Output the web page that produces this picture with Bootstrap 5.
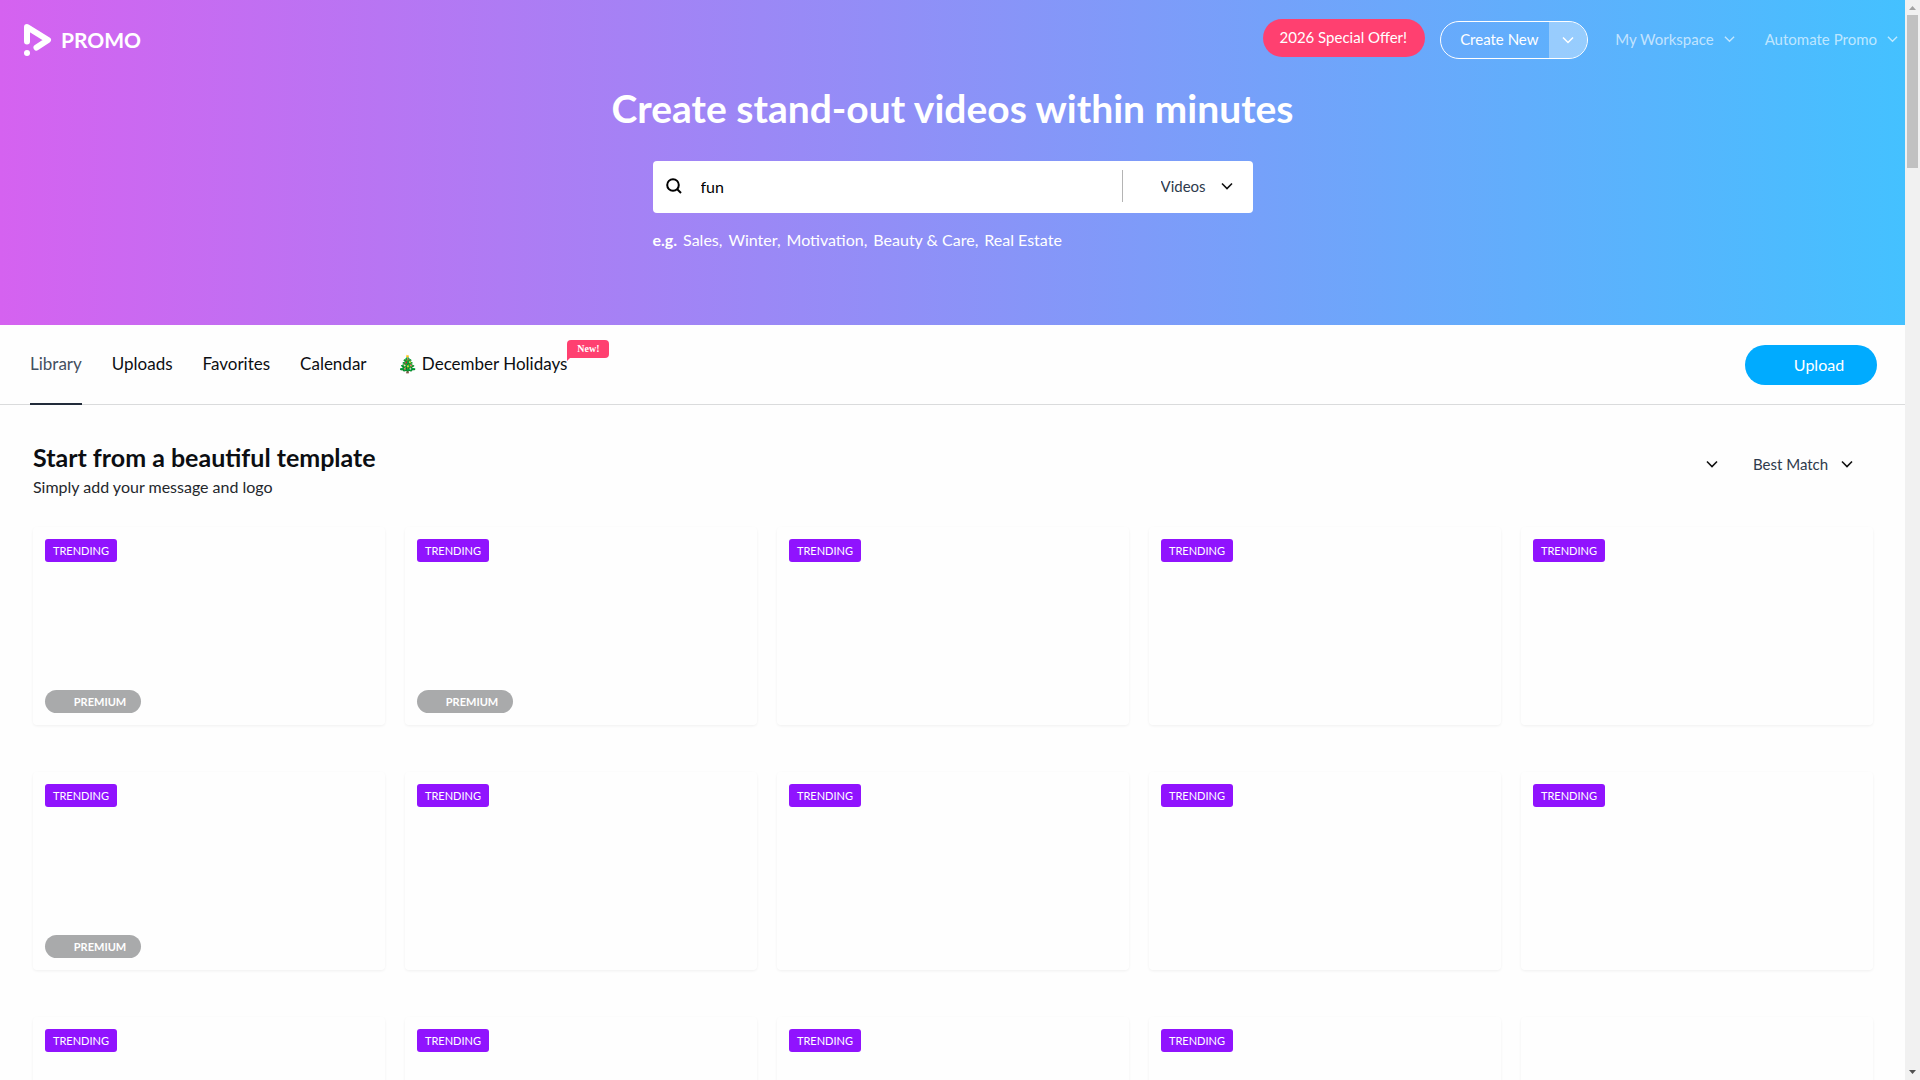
<!DOCTYPE html>
<html lang="en">
<head>
<meta charset="utf-8">
<meta name="viewport" content="width=device-width, initial-scale=1">
<title>Promo</title>
<link href="https://cdn.jsdelivr.net/npm/bootstrap@5.3.0/dist/css/bootstrap.min.css" rel="stylesheet">
<style>
  body { font-family: Lato, "Liberation Sans", sans-serif; font-size: 16px; line-height: 24px; color: #0c0e12; background: #fefefe; }
  a { text-decoration: none; color: inherit; }
  h1, h2, p { margin: 0; }
  .scroll-track { width: 15px; flex: none; background: #f1f1f1; }
  .scroll-track svg { display: block; width: 15px; height: 15px; }
  .scroll-thumb { width: 11px; height: 153px; background: #c1c1c1; }

  .hero { height: 325px; background: linear-gradient(90deg, #d562f0, #44c1ff); color: #fff; }
  .top-bar { height: 80px; padding: 0 7px 0 24px; }
  .brand { font-size: 21px; font-weight: 700; gap: 9px; }
  .top-actions { font-size: 15px; }
  .pill { height: 38px; border-radius: 19px; font-size: 15px; line-height: 20px; }
  .pill-offer { background: #ff4070; color: #fff; width: 162px; padding: 0 2px 2px 0; margin: 0 15px 4px 0; }
  .create-group { border: 1px solid #fff; overflow: hidden; margin-right: 27px; }
  .create-group button { border: 0; background: none; color: #fff; padding: 0; }
  .create-group .create-main { width: 108px; padding: 0 0 2px 8px; }
  .create-group .create-more { width: 38px; background: #ffffff5c; }
  .menu-link { color: #ffffffa6; gap: 10px; padding-bottom: 2px; }
  .menu-link + .menu-link { margin-left: 30px; }
  .hero-title { font-size: 39px; line-height: 48px; font-weight: 700; margin-top: 4px; }
  .search-box { width: 600px; height: 52px; margin-top: 29px; background: #fff; border-radius: 4px; padding: 0 13px 2px; }
  .search-box input { font-size: 16px; color: #000; padding: 2px 0 0; margin-left: 19px; }
  .search-box input, .search-box input:focus { border: 0; box-shadow: none; background: none; }
  .search-rule { width: 1px; height: 32px; background: #b4b4b4; margin-right: 38px; }
  .plain-select { width: auto; flex: none; border: 0; background-color: transparent; font-size: 15px; line-height: 24px; color: #2e3a4c; padding: 0 24px 0 0; background-position: right 0 center; background-size: 12px 12px;
    background-image: url("data:image/svg+xml,%3Csvg xmlns='http://www.w3.org/2000/svg' viewBox='0 0 12 12'%3E%3Cpath d='M1 3.5l5 5 5-5' fill='none' stroke='%23111' stroke-width='1.6'/%3E%3C/svg%3E"); }
  .search-box .plain-select { padding-right: 26px; margin-right: 7px; }
  .examples { width: 600px; margin-top: 15px; gap: 6px; }

  .tab-bar { height: 80px; border-bottom: 1px solid #dadbdc; padding: 0 28px 0 30px; }
  .tabs { gap: 30px; height: 80px; font-size: 17px; }
  .tab-item { display: flex; align-items: center; height: 80px; border-bottom: 2px solid transparent; position: relative; }
  .tab-item.active { border-color: #222c3a; color: #44505f; }
  .new-flag { position: absolute; left: 100%; top: 15px; width: 42px; height: 18px; background: #ff4070; border-radius: 4px 4px 4px 0; color: #fff; font: bold 10px/18px "Liberation Serif", serif; text-align: center; }
  .new-flag::after { content: ""; position: absolute; left: 0; top: 17px; border-top: 4px solid #ff4070; border-right: 4px solid transparent; }
  .pill-upload { height: 40px; border-radius: 20px; width: 132px; background: #00abff; color: #fff; padding: 0 0 0 16px; font-size: 16px; }

  .library { padding: 35px 32px 0 33px; }
  .library h2 { font-size: 25px; line-height: 34px; font-weight: 700; }
  .library p { margin-top: 1px; color: #24272c; }
  .filters { gap: 35px; padding: 12px 20px 0 0; }
  .clip-grid { display: grid; grid-template-columns: repeat(5, 1fr); gap: 47px 20px; margin-top: 28px; }
  .clip { aspect-ratio: 16 / 9; border-radius: 4px; box-shadow: 0 1px 3px #0000000f; padding: 12px; }
  .tag { height: 23px; line-height: 23px; font-size: 11px; color: #fff; text-align: center; }
  .tag-trend { width: 72px; background: #9013fe; border-radius: 3px; }
  .tag-premium { width: 96px; background: #a9aaab; border-radius: 12px; font-weight: 700; padding-left: 14px; }
</style>
<script src="https://cdn.jsdelivr.net/npm/bootstrap@5.3.0/dist/js/bootstrap.bundle.min.js"></script>
</head>
<body>
<div class="d-flex vh-100 overflow-hidden">
  <div class="flex-grow-1 overflow-hidden">
    <header class="hero d-flex flex-column align-items-center">
      <nav class="top-bar w-100 d-flex align-items-center justify-content-between">
        <a href="#" class="brand d-flex align-items-center">
          <svg width="28" height="32" viewBox="0 0 28 32" fill="none" stroke="#fff" stroke-width="6" stroke-linecap="round" stroke-linejoin="round"><path d="M3 17.500V3L24 16 12.500 23.500"/><circle cx="3" cy="29" r="3" fill="#fff" stroke="none"/></svg>
          <span>PROMO</span>
        </a>
        <div class="top-actions d-flex align-items-center">
          <button type="button" class="btn pill pill-offer">2026 Special Offer!</button>
          <div class="create-group pill d-flex">
            <button type="button" class="create-main">Create New</button>
            <button type="button" class="create-more d-flex align-items-center justify-content-center" aria-label="More create options"><svg width="12" height="12" viewBox="0 0 12 12" fill="none" stroke="#fff" stroke-width="1.500"><path d="M1 3.500l5 5 5-5"/></svg></button>
          </div>
          <a href="#" class="menu-link d-flex align-items-center">My Workspace <svg width="11" height="12" viewBox="0 0 12 12" fill="none" stroke="currentColor" stroke-width="1.500"><path d="M1 3.500l5 5 5-5"/></svg></a>
          <a href="#" class="menu-link d-flex align-items-center">Automate Promo <svg width="11" height="12" viewBox="0 0 12 12" fill="none" stroke="currentColor" stroke-width="1.500"><path d="M1 3.500l5 5 5-5"/></svg></a>
        </div>
      </nav>
      <h1 class="hero-title">Create stand-out videos within minutes</h1>
      <form class="search-box d-flex align-items-center">
        <svg width="16" height="16" viewBox="0 0 16 16" fill="none" stroke="#000" stroke-width="2" class="flex-shrink-0"><circle cx="7" cy="7" r="5.800"/><path d="M11 11l4 4"/></svg>
        <input type="text" class="form-control" value="fun" aria-label="Search videos">
        <span class="search-rule flex-shrink-0"></span>
        <select class="form-select plain-select" aria-label="Media type"><option>Videos</option></select>
      </form>
      <p class="examples d-flex"><b>e.g.</b> <a href="#">Sales,</a> <a href="#">Winter,</a> <a href="#">Motivation,</a> <a href="#">Beauty &amp; Care,</a> <a href="#">Real Estate</a></p>
    </header>
    <div class="tab-bar d-flex align-items-center justify-content-between">
      <nav class="tabs d-flex">
        <a href="#" class="tab-item active">Library</a>
        <a href="#" class="tab-item">Uploads</a>
        <a href="#" class="tab-item">Favorites</a>
        <a href="#" class="tab-item">Calendar</a>
        <a href="#" class="tab-item">🎄 December Holidays<span class="new-flag">New!</span></a>
      </nav>
      <button type="button" class="btn pill-upload">Upload</button>
    </div>
    <main class="library">
      <div class="d-flex justify-content-between align-items-start">
        <div>
          <h2>Start from a beautiful template</h2>
          <p>Simply add your message and logo</p>
        </div>
        <div class="filters d-flex">
          <select class="form-select plain-select" aria-label="Filter"><option label=" "></option></select>
          <select class="form-select plain-select" aria-label="Sort order"><option>Best Match</option></select>
        </div>
      </div>
      <div class="clip-grid">
        <div class="clip d-flex flex-column justify-content-between"><span class="tag tag-trend">TRENDING</span><span class="tag tag-premium">PREMIUM</span></div>
        <div class="clip d-flex flex-column justify-content-between"><span class="tag tag-trend">TRENDING</span><span class="tag tag-premium">PREMIUM</span></div>
        <div class="clip d-flex flex-column"><span class="tag tag-trend">TRENDING</span></div>
        <div class="clip d-flex flex-column"><span class="tag tag-trend">TRENDING</span></div>
        <div class="clip d-flex flex-column"><span class="tag tag-trend">TRENDING</span></div>
        <div class="clip d-flex flex-column justify-content-between"><span class="tag tag-trend">TRENDING</span><span class="tag tag-premium">PREMIUM</span></div>
        <div class="clip d-flex flex-column"><span class="tag tag-trend">TRENDING</span></div>
        <div class="clip d-flex flex-column"><span class="tag tag-trend">TRENDING</span></div>
        <div class="clip d-flex flex-column"><span class="tag tag-trend">TRENDING</span></div>
        <div class="clip d-flex flex-column"><span class="tag tag-trend">TRENDING</span></div>
        <div class="clip d-flex flex-column"><span class="tag tag-trend">TRENDING</span></div>
        <div class="clip d-flex flex-column"><span class="tag tag-trend">TRENDING</span></div>
        <div class="clip d-flex flex-column"><span class="tag tag-trend">TRENDING</span></div>
        <div class="clip d-flex flex-column"><span class="tag tag-trend">TRENDING</span></div>
        <div class="clip"></div>
      </div>
    </main>
  </div>
  <div class="scroll-track d-flex flex-column align-items-center" aria-hidden="true">
    <svg viewBox="0 0 15 15"><path d="M4 10h7L7.500 6z" fill="#a3a3a3"/></svg>
    <div class="scroll-thumb"></div>
    <svg viewBox="0 0 15 15" class="mt-auto"><path d="M4 5h7L7.500 9z" fill="#505050"/></svg>
  </div>
</div>
</body>
</html>
